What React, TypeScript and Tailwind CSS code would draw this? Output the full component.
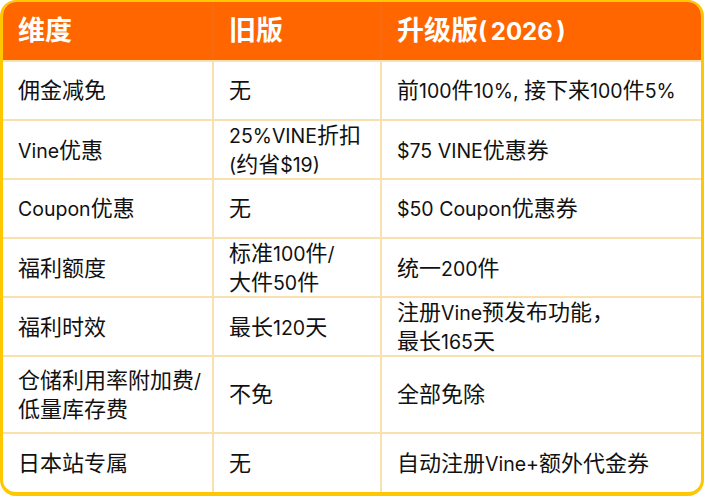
import type { ReactNode } from 'react'

const rows: Array<{ h: string; cells: string[][] }> = [
  { h: 'h-[59px]', cells: [['佣金减免'], ['无'], ['前100件10%, 接下来100件5%']] },
  { h: 'h-[59px]', cells: [['Vine优惠'], ['25%VINE折扣', '(约省$19)'], ['$75 VINE优惠券']] },
  { h: 'h-[59px]', cells: [['Coupon优惠'], ['无'], ['$50 Coupon优惠券']] },
  { h: 'h-[59px]', cells: [['福利额度'], ['标准100件/', '大件50件'], ['统一200件']] },
  { h: 'h-[59px]', cells: [['福利时效'], ['最长120天'], ['注册Vine预发布功能，', '最长165天']] },
  { h: 'h-[77px]', cells: [['仓储利用率附加费/', '低量库存费'], ['不免'], ['全部免除']] },
  { h: 'h-[60px]', cells: [['日本站专属'], ['无'], ['自动注册Vine+额外代金券']] },
]

const headers = ['维度', '旧版', '升级版(\u20092026\u2009)']

// CJK runs are set a bit larger than the latin ones, as in the screenshot
function mixed(text: string, cjkClass: string): ReactNode[] {
  return text
    .split(/([\u3000-\u303f\u4e00-\u9fff\uff00-\uffef]+)/)
    .map((part, i) =>
      i % 2 ? (
        <span key={i} className={cjkClass}>
          {part}
        </span>
      ) : (
        part
      )
    )
}

export default function App() {
  return (
    <div
      className="w-[704px] h-[496px] bg-white"
      style={{ fontFamily: 'Inter, "Noto Sans CJK SC", sans-serif' }}
    >
      <div className="h-full overflow-hidden rounded-[16px] border-t-2 border-x-[3px] border-b-4 border-[#ffc700] bg-white">
        <div className="grid h-[58px] grid-cols-[211px_168px_1fr] bg-[#ff6600] text-[24px] font-bold text-white">
          {headers.map((h, i) => (
            <div
              key={h}
              className={`flex items-center whitespace-pre pl-[15px] ${i < 2 ? 'border-r-2 border-[#f56a12]' : ''}`}
            >
              <span>{mixed(h, 'text-[27px]')}</span>
            </div>
          ))}
        </div>
        {rows.map((row, r) => (
          <div
            key={r}
            className={`grid grid-cols-[211px_168px_1fr] border-t-2 border-[#f9e1ad] ${row.h}`}
          >
            {row.cells.map((lines, i) => (
              <div
                key={i}
                className={`flex flex-col justify-center pl-[15px] text-[19.5px] leading-[28px] text-[#111111] ${
                  i < 2 ? 'border-r-2 border-[#f9e1ad]' : ''
                }`}
              >
                {lines.map((t) => (
                  <span key={t} className="whitespace-nowrap">
                    {mixed(t, 'text-[22px] leading-[28px]')}
                  </span>
                ))}
              </div>
            ))}
          </div>
        ))}
      </div>
    </div>
  )
}
